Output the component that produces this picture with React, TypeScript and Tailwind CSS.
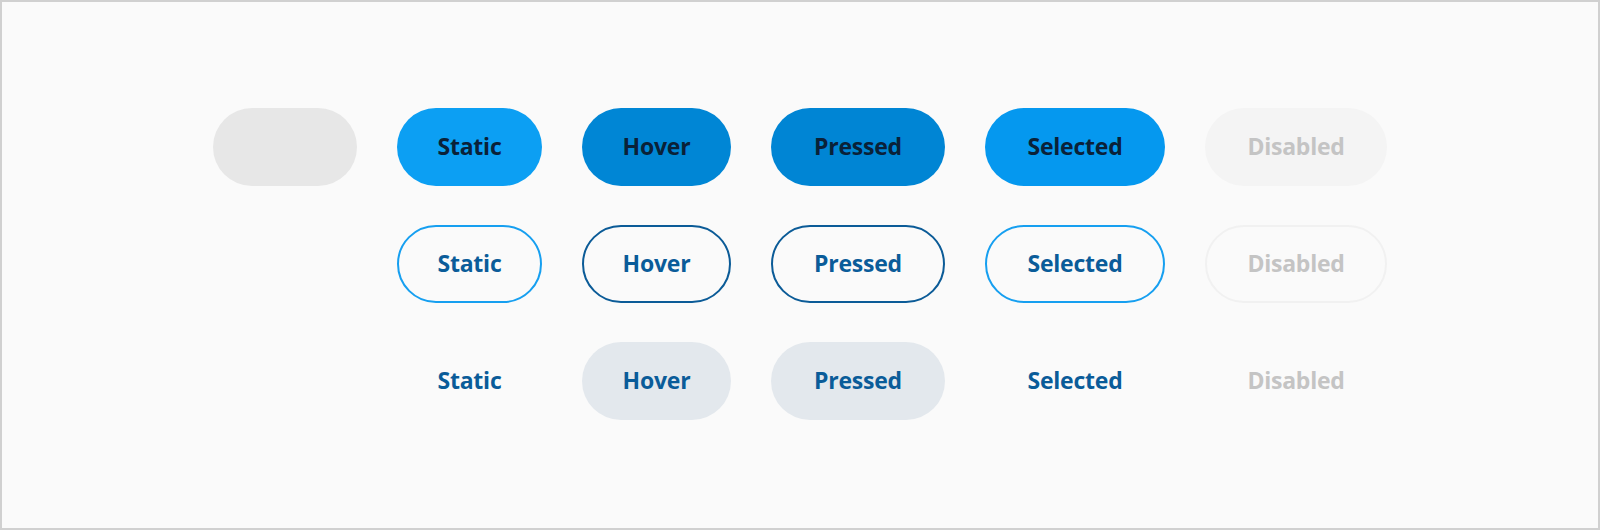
const states = [
  { label: "Static", w: "w-[145px]" },
  { label: "Hover", w: "w-[149px]" },
  { label: "Pressed", w: "w-[174px]" },
  { label: "Selected", w: "w-[180px]" },
  { label: "Disabled", w: "w-[182px]" },
];

// fill / outline / text variants per state
const filled: Record<string, string> = {
  Static: "bg-[#0c9ff3] text-[#0a2138]",
  Hover: "bg-[#0086d5] text-[#0a2138]",
  Pressed: "bg-[#0085d4] text-[#0a2138]",
  Selected: "bg-[#0598ef] text-[#0a2138]",
  Disabled: "bg-[#f4f4f4] text-[#c4c4c4]",
};

const outlined: Record<string, string> = {
  Static: "border-[2.5px] border-[#169ff0] text-[#0a5c99]",
  Hover: "border-[2.5px] border-[#0b5b97] text-[#0a5c99]",
  Pressed: "border-[2.5px] border-[#0b5b97] text-[#0a5c99]",
  Selected: "border-[2.5px] border-[#169ff0] text-[#0a5c99]",
  Disabled: "border-[2.5px] border-[#f1f1f1] text-[#c4c4c4]",
};

const ghost: Record<string, string> = {
  Static: "text-[#0a5c99]",
  Hover: "bg-[#e3e8ed] text-[#0a5c99]",
  Pressed: "bg-[#e3e8ed] text-[#0a5c99]",
  Selected: "text-[#0a5c99]",
  Disabled: "text-[#c4c4c4]",
};

function Pill({ label, w, cls }: { label: string; w: string; cls: string }) {
  return (
    <button
      className={`h-[78px] ${w} rounded-full flex items-center justify-center pb-[2px] text-[23px] font-bold tracking-[-0.01em] ${cls}`}
    >
      {label}
    </button>
  );
}

export default function App() {
  const rows = [filled, outlined, ghost];
  return (
    <div
      className="w-[1600px] h-[530px] bg-[#fafafa] border-2 border-[#d0d0d0] flex items-center justify-center pb-[2px]"
      style={{ fontFamily: "'Open Sans', 'Noto Sans', sans-serif" }}
    >
      <div className="grid grid-cols-[144px_145px_149px_174px_180px_182px] gap-x-10 gap-y-[39px]">
        {rows.map((variant, i) => (
          <div key={i} className="contents">
            {i === 0 ? (
              <div className="h-[78px] w-[144px] rounded-full bg-[#e7e7e7]" />
            ) : (
              <div />
            )}
            {states.map((s) => (
              <Pill key={s.label} label={s.label} w={s.w} cls={variant[s.label]} />
            ))}
          </div>
        ))}
      </div>
    </div>
  );
}
